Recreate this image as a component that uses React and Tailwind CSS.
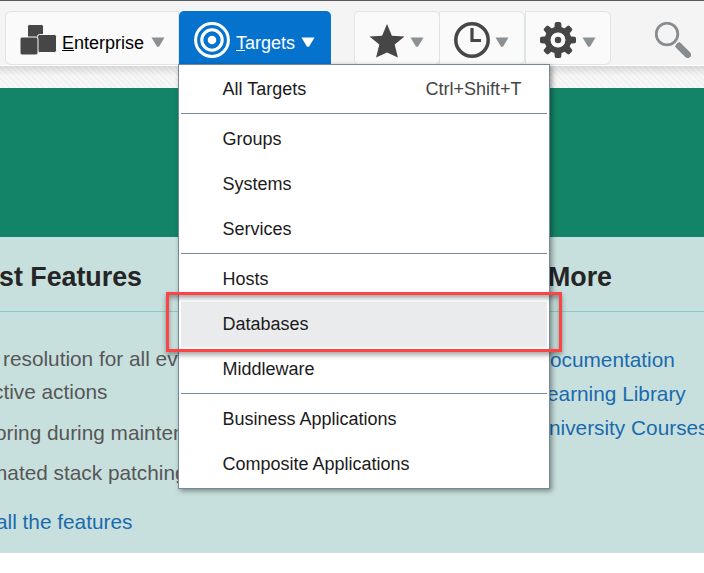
import React from "react";

const Caret = ({ className }) => (
  <svg viewBox="0 0 14 10" className={"h-[10px] w-[14px] shrink-0 " + className} fill="currentColor">
    <path d="M0.5 0.5h13L8.3 9.2q-1.3 1.2-2.6 0z" />
  </svg>
);

const EnterpriseIcon = () => (
  <svg viewBox="0 0 38 32" className="h-8 w-[38px] shrink-0" fill="#464646" stroke="#fafafa" strokeWidth="1">
    <rect x="7.5" y="0.5" width="16" height="17" rx="2" />
    <rect x="17.5" y="10.5" width="19" height="18" rx="2" />
    <rect x="0" y="13" width="18" height="18" rx="2" />
  </svg>
);

const TargetIcon = () => (
  <svg viewBox="0 0 36 36" className="h-9 w-9 shrink-0" fill="none" stroke="#fff">
    <circle cx="18" cy="18" r="16.4" strokeWidth="3" />
    <circle cx="18" cy="18" r="10.2" strokeWidth="3.1" />
    <circle cx="18" cy="18" r="4.3" fill="#fff" stroke="none" />
  </svg>
);

const StarIcon = () => (
  <svg viewBox="0 0 36 36" className="h-9 w-9 shrink-0" fill="#464646">
    <path d="M18 2l4.9 11.7 12.6.8-9.8 8 3.2 13.1L18 30.5 7.1 35.6l3.2-13.1-9.8-8 12.6-.8z" />
  </svg>
);

const ClockIcon = () => (
  <svg viewBox="0 0 36 36" className="h-9 w-9 shrink-0" fill="none" stroke="#464646">
    <circle cx="18" cy="18" r="16.2" strokeWidth="3.5" />
    <path d="M18 6v12.5h9" strokeWidth="3.2" />
  </svg>
);

const teeth = [0, 45, 90, 135, 180, 225, 270, 315];
const GearIcon = () => (
  <svg viewBox="0 0 36 36" className="h-9 w-9 shrink-0">
    {teeth.map((a) => (
      <path key={a} transform={`rotate(${a} 18 18)`} d="M14 9L14.8 1.5Q15 0 16.3 0h3.4q1.3 0 1.5 1.5L22 9z" fill="#464646" />
    ))}
    <circle cx="18" cy="18" r="10.3" fill="none" stroke="#464646" strokeWidth="6" />
    <circle cx="18" cy="18" r="7.4" fill="#fafafa" />
    <circle cx="18" cy="18" r="3.2" fill="#464646" />
  </svg>
);

const SearchIcon = () => (
  <svg viewBox="0 0 36 36" className="h-9 w-9 shrink-0" fill="none" stroke="#868c90">
    <circle cx="12" cy="12" r="10.8" strokeWidth="2.8" />
    <path d="M22.2 22.2L33 33" strokeWidth="6.4" strokeLinecap="butt" />
    <path d="M24 24L32.8 32.8" strokeWidth="6.4" strokeLinecap="round" />
  </svg>
);

const Item = ({ children, shortcut, active }) => (
  <div className={"mx-[2px] flex h-[45px] items-center justify-between pb-[2px] pl-[41.5px] pr-[25.5px] " + (active ? "bg-[#eaebed]" : "")}>
    <span>{children}</span>
    {shortcut && <span className="text-[#444]">{shortcut}</span>}
  </div>
);

const Separator = () => <div className="mx-[2px] mt-px mb-[3px] h-px bg-[#748a9b]" />;

const button = "flex h-[54px] items-start border border-[#dfe4e7] bg-[#fafafa]";

export default function App() {
  return (
    <div className="relative h-[573px] w-[704px] overflow-hidden bg-white font-['Liberation_Sans',Arial,sans-serif] text-lg leading-none whitespace-nowrap">
      <header className="flex h-[66px] border-t border-b border-t-[#5b585c] border-b-white bg-[#f4f4f4] pt-[10px] pl-[5px]">
        <div className={button + " w-[174px] rounded-l-md pl-[14px] pt-[12px] text-black"}>
          <EnterpriseIcon />
          <span className="mt-[10px] ml-[4px]"><u className="underline decoration-1 underline-offset-1">E</u>nterprise</span>
          <Caret className="mt-[13px] ml-[7px] text-[#8a9093]" />
        </div>
        <div className="flex h-[54px] w-[152px] rounded-t-[5px] bg-[#0572ce] pt-[11px] pl-[15px] text-white">
          <TargetIcon />
          <span className="mt-[12px] ml-[6px]"><u className="underline decoration-1 underline-offset-1">T</u>argets</span>
          <Caret className="mt-[15px] ml-[6px]" />
        </div>
        <div className={button + " ml-[23px] w-[86px] rounded-l-sm rounded-r-md pt-[10px] pl-[14px]"}>
          <StarIcon /><Caret className="mt-[15px] ml-[5px] text-[#8a9093]" />
        </div>
        <div className={button + " -ml-px w-[86px] rounded-r-md pt-[10px] pl-[14px]"}>
          <ClockIcon /><Caret className="mt-[15px] ml-[5px] text-[#8a9093]" />
        </div>
        <div className={button + " w-[86px] rounded-r-md pt-[10px] pl-[14px]"}>
          <GearIcon /><Caret className="mt-[15px] ml-[6px] text-[#8a9093]" />
        </div>
        <div className="ml-[44px] pt-[11px]"><SearchIcon /></div>
      </header>

      <div className="h-[22px] bg-[repeating-linear-gradient(45deg,#f8f8f8_0_2px,#f1f1f1_2px_4px)]">
        <div className="h-[10px] bg-linear-to-b from-black/12 to-transparent" />
      </div>
      <div className="h-[149px] bg-[#148466]" />

      <main className="flex h-[316px] bg-[#c8e0dd] text-[20.8px] leading-6 text-[#565656]">
        <section className="w-[549px] shrink-0">
          <div className="h-[75px] border-b border-[#86cdc8] pt-[24px]">
            <h2 className="-ml-px text-[26.8px] leading-[32px] font-bold text-[#252525]">st Features</h2>
          </div>
          <div className="w-[179px]">
            <p className="mt-[35px] ml-[3px]">resolution for all ev</p>
            <p className="mt-[9px] -ml-[7px]">ctive actions</p>
            <p className="mt-[17px] -ml-[5px]">oring during mainten</p>
            <p className="mt-[16px] -ml-[10px]">mated stack patching</p>
            <p className="mt-[25px] -ml-[4px] text-[#1a6aad]">all the features</p>
          </div>
        </section>
        <section className="flex-1 overflow-hidden text-[#1a6aad]">
          <div className="h-[75px] border-b border-[#86cdc8] pt-[24px]">
            <h2 className="-ml-px text-[26.8px] leading-[32px] font-bold text-[#252525]">More</h2>
          </div>
          <p className="mt-[36px] ml-px">ocumentation</p>
          <p className="mt-[10px] -ml-[2px]">earning Library</p>
          <p className="mt-[10px]">niversity Courses</p>
        </section>
      </main>

      <nav className="absolute top-[64px] left-[178px] h-[425px] w-[372px] border border-[#748a9b] bg-white pt-[2px] text-[#1b1b1b] shadow-[2px_2px_5px_rgba(0,0,0,0.4)]">
        <Item shortcut="Ctrl+Shift+T">All Targets</Item>
        <Separator />
        <Item>Groups</Item>
        <Item>Systems</Item>
        <Item>Services</Item>
        <Separator />
        <Item>Hosts</Item>
        <Item active>Databases</Item>
        <Item>Middleware</Item>
        <Separator />
        <Item>Business Applications</Item>
        <Item>Composite Applications</Item>
      </nav>
      <div className="absolute top-[292px] left-[166px] h-[60px] w-[396px] border-3 border-[#fc4345] shadow-[0_3px_5px_rgba(0,0,0,0.35),inset_0_3px_5px_rgba(0,0,0,0.35)]" />
    </div>
  );
}
